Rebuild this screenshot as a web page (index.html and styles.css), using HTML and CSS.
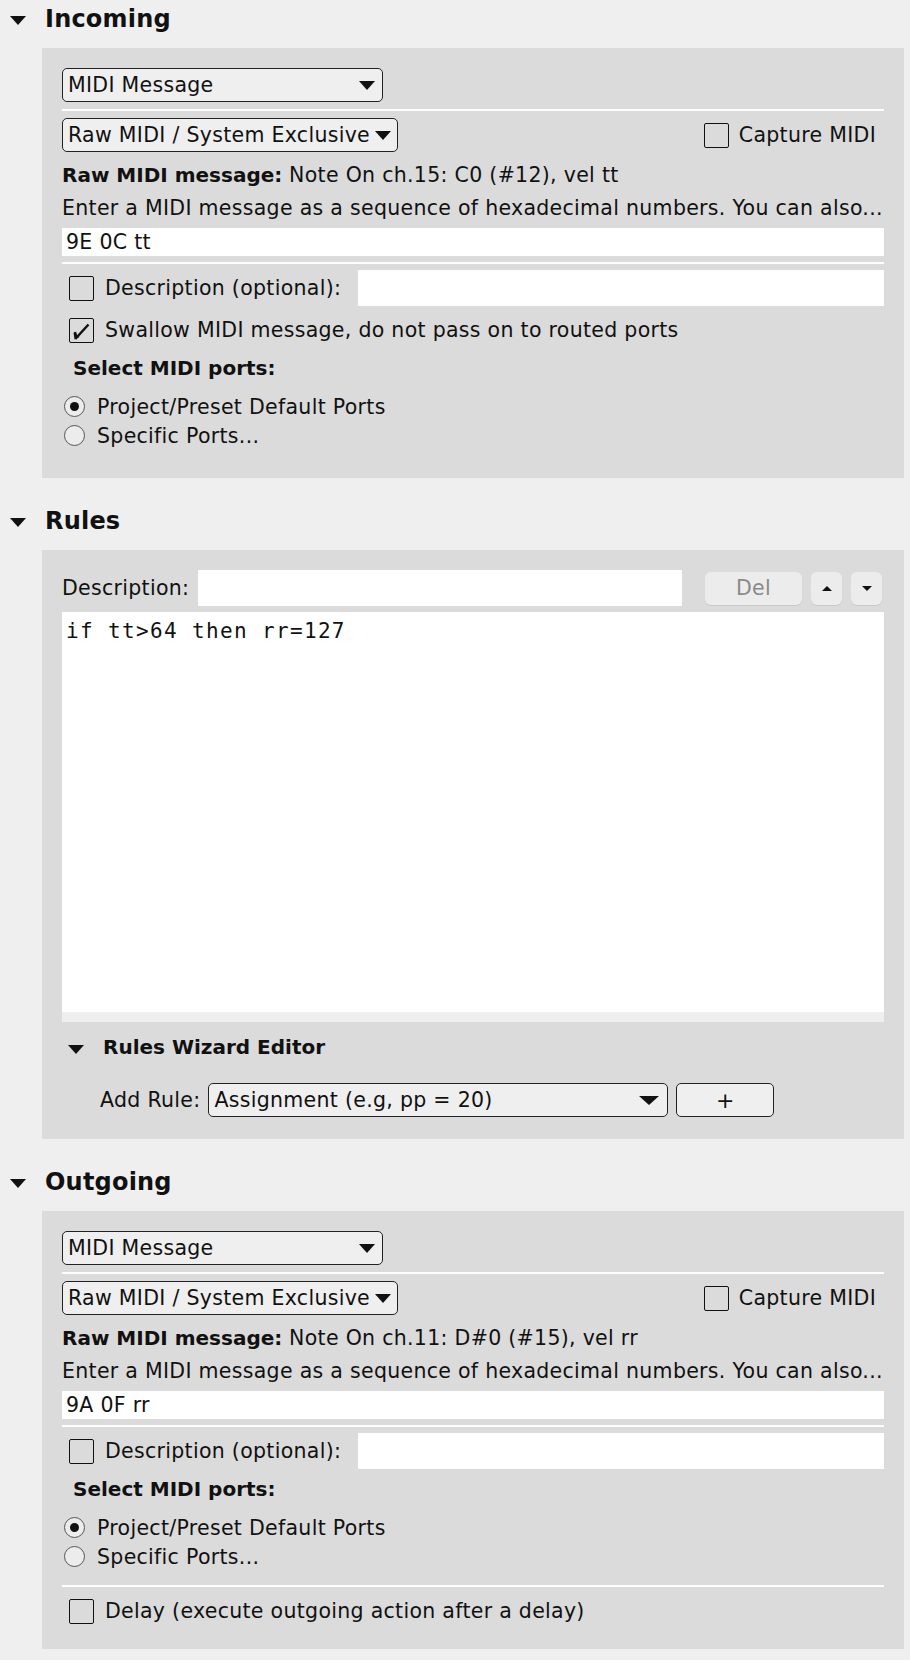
FILE: index.html
```html
<!DOCTYPE html>
<html>
<head>
	<meta http-equiv="Content-Type" content="text/html; charset=utf-8" />
	<title>Translator</title>
	<link rel="stylesheet" href="styles.css">
</head>
<body>
	<!-- Incoming -->
	<div class="section">
		<div class="sec-head"><span class="tri"></span>Incoming</div>
		<div class="panel">
			<div class="combo combo-type"><span>MIDI Message</span><i class="arrow"></i></div>
			<div class="sep sep-wide"></div>
			<div class="row-split">
				<div class="combo combo-raw"><span>Raw MIDI / System Exclusive</span><i class="arrow"></i></div>
				<label class="check capture"><span class="box"></span>Capture MIDI</label>
			</div>
			<div class="info first"><b>Raw MIDI message:</b> Note On ch.15: C0 (#12), vel tt</div>
			<div class="info">Enter a MIDI message as a sequence of hexadecimal numbers. You can also...</div>
			<input class="field hex" type="text" value="9E 0C tt">
			<div class="sep"></div>
			<div class="desc-row">
				<label class="check"><span class="box"></span>Description (optional):</label>
				<input class="field desc" type="text">
			</div>
			<label class="check swallow">
				<span class="box">
					<svg width="22" height="22" viewBox="0 0 22 22"><path d="M5 13 L6.5 18.5 L18.5 5.5" fill="none" stroke="#111" stroke-width="2.4"/><path d="M3.5 13.5 L9.5 18 L4.5 20.5 Z" fill="#111"/></svg>
				</span>Swallow MIDI message, do not pass on to routed ports
			</label>
			<div class="ports-title">Select MIDI ports:</div>
			<div class="radios">
				<div class="radio"><span class="dot on"></span>Project/Preset Default Ports</div>
				<div class="radio"><span class="dot"></span>Specific Ports...</div>
			</div>
		</div>
	</div>

	<!-- Rules -->
	<div class="section">
		<div class="sec-head"><span class="tri"></span>Rules</div>
		<div class="panel panel-rules">
			<div class="rule-head">
				<span>Description:</span>
				<input class="field rule-desc" type="text">
				<span class="btn btn-del">Del</span>
				<span class="btn btn-sm"><i class="mini-up"></i></span>
				<span class="btn btn-sm"><i class="mini-down"></i></span>
			</div>
			<div class="code">if tt&gt;64 then rr=127</div>
			<div class="hscroll"></div>
			<div class="wiz-head"><span class="tri"></span>Rules Wizard Editor</div>
			<div class="add-row">
				<span>Add Rule:</span>
				<div class="combo combo-rule"><span>Assignment (e.g, pp = 20)</span><i class="arrow"></i></div>
				<span class="btn-plus">+</span>
			</div>
		</div>
	</div>

	<!-- Outgoing -->
	<div class="section">
		<div class="sec-head"><span class="tri"></span>Outgoing</div>
		<div class="panel">
			<div class="combo combo-type"><span>MIDI Message</span><i class="arrow"></i></div>
			<div class="sep sep-wide"></div>
			<div class="row-split">
				<div class="combo combo-raw"><span>Raw MIDI / System Exclusive</span><i class="arrow"></i></div>
				<label class="check capture"><span class="box"></span>Capture MIDI</label>
			</div>
			<div class="info first"><b>Raw MIDI message:</b> Note On ch.11: D#0 (#15), vel rr</div>
			<div class="info">Enter a MIDI message as a sequence of hexadecimal numbers. You can also...</div>
			<input class="field hex" type="text" value="9A 0F rr">
			<div class="sep"></div>
			<div class="desc-row">
				<label class="check"><span class="box"></span>Description (optional):</label>
				<input class="field desc" type="text">
			</div>
			<div class="ports-title">Select MIDI ports:</div>
			<div class="radios">
				<div class="radio"><span class="dot on"></span>Project/Preset Default Ports</div>
				<div class="radio"><span class="dot"></span>Specific Ports...</div>
			</div>
			<div class="sep sep-after"></div>
			<label class="check delay"><span class="box"></span>Delay (execute outgoing action after a delay)</label>
		</div>
	</div>
</body>
</html>
```

FILE: styles.css
```css
body {
    margin: 0;
    padding: 0 6px 10px 0;
    background-color: #efefef;
    font-family: "DejaVu Sans", sans-serif;
    font-size: 20.5px;
    letter-spacing: 0.3px;
    color: #111;
}

b {
    font-size: 20px;
    letter-spacing: 0;
}

/* section headers */
.sec-head {
    display: flex;
    align-items: center;
    height: 28px;
    line-height: 28px;
    padding: 5px 0 0 10px;
    margin-bottom: 15px;
    font-size: 24px;
    font-weight: bold;
    letter-spacing: 0.2px;
}

.section + .section .sec-head {
    padding-top: 0;
    margin-top: 29px;
}

.tri {
    width: 0;
    height: 0;
    border-left: 8px solid transparent;
    border-right: 8px solid transparent;
    border-top: 9px solid #111;
    margin-right: 19px;
    margin-top: 3px;
}

.panel {
    margin-left: 42px;
    background-color: #dbdbdb;
    padding: 20px;
}

.panel-rules {
    padding-bottom: 22px;
}

/* combo boxes */
.combo {
    display: flex;
    align-items: center;
    justify-content: space-between;
    box-sizing: border-box;
    height: 34px;
    border: 1px solid #222;
    border-radius: 5px;
    background-color: #efefef;
    padding: 0 7px 0 5px;
}

.combo-type {
    width: 321px;
}

.combo-raw {
    width: 336px;
    padding-right: 6px;
}

.combo-rule {
    width: 460px;
    margin-left: 8px;
    padding-right: 8px;
}

.arrow {
    width: 0;
    height: 0;
    border-left: 8px solid transparent;
    border-right: 8px solid transparent;
    border-top: 9px solid #111;
}

.combo-rule .arrow {
    border-left-width: 10px;
    border-right-width: 10px;
}

.sep {
    height: 2px;
    background-color: #fff;
    margin: 6px 0;
}

.sep-wide {
    margin: 7px 0;
}

.sep-after {
    margin-top: 14px;
}

.row-split {
    display: flex;
    justify-content: space-between;
    align-items: center;
    height: 34px;
}

.check {
    display: flex;
    align-items: center;
}

.box {
    display: block;
    box-sizing: border-box;
    width: 25px;
    height: 25px;
    border: 1.5px solid #111;
    border-radius: 2px;
    margin-right: 11px;
}

.box svg {
    display: block;
}

.capture {
    margin-right: 8px;
}

.capture .box {
    margin-right: 10px;
}

.info {
    line-height: 33px;
    white-space: nowrap;
}

.info.first {
    margin-top: 7px;
}

/* text fields */
.field {
    display: block;
    box-sizing: border-box;
    width: 100%;
    height: 28px;
    border: none;
    padding: 0 4px;
    background-color: #fff;
    font: inherit;
    letter-spacing: inherit;
    color: #111;
    outline: none;
}

.hex {
    margin-top: 3px;
}

.desc-row {
    display: flex;
    align-items: center;
    height: 36px;
    padding-left: 7px;
}

.desc {
    width: 526px;
    height: 36px;
    margin-left: auto;
}

.swallow,
.delay {
    height: 36px;
    padding-left: 7px;
}

.swallow {
    margin-top: 6px;
}

.ports-title {
    font-size: 20px;
    font-weight: bold;
    letter-spacing: 0;
    line-height: 33px;
    margin-top: 4px;
    padding-left: 11px;
}

.radios {
    margin: 7px 0 8px;
    padding-left: 2px;
}

.radio {
    display: flex;
    align-items: center;
    height: 29px;
}

.dot {
    display: flex;
    align-items: center;
    justify-content: center;
    box-sizing: border-box;
    width: 21px;
    height: 21px;
    border: 1px solid #555;
    border-radius: 50%;
    background-color: #ececec;
    margin-right: 12px;
}

.dot.on::after {
    content: "";
    width: 9px;
    height: 9px;
    border-radius: 50%;
    background-color: #111;
}

/* rules */
.rule-head {
    display: flex;
    align-items: center;
    height: 36px;
}

.rule-desc {
    flex: 1;
    width: auto;
    height: 36px;
    margin: 0 23px 0 9px;
}

.btn {
    display: flex;
    align-items: center;
    justify-content: center;
    height: 33px;
    border-radius: 6px;
    background-color: #ececec;
    box-shadow: 0 1px 0 #c9c9c9;
}

.btn-del {
    width: 97px;
    color: #8a8a8a;
}

.btn-sm {
    width: 31px;
    margin-left: 9px;
}

.btn-sm:last-child {
    margin-right: 2px;
}

.mini-up {
    width: 0;
    height: 0;
    border-left: 5px solid transparent;
    border-right: 5px solid transparent;
    border-bottom: 5px solid #111;
}

.mini-down {
    width: 0;
    height: 0;
    border-left: 5px solid transparent;
    border-right: 5px solid transparent;
    border-top: 5px solid #111;
}

.code {
    box-sizing: border-box;
    height: 400px;
    margin-top: 6px;
    padding: 5px 4px;
    background-color: #fff;
    font-family: "DejaVu Sans Mono", monospace;
    font-size: 21px;
    line-height: 28px;
    letter-spacing: 1.35px;
}

.hscroll {
    height: 10px;
    background-color: #efefef;
}

.wiz-head {
    display: flex;
    align-items: center;
    margin-top: 9px;
    padding-left: 6px;
    line-height: 33px;
    font-size: 20px;
    font-weight: bold;
    letter-spacing: 0;
}

.wiz-head .tri {
    margin-top: 4px;
}

.add-row {
    display: flex;
    align-items: center;
    margin-top: 19px;
    padding-left: 38px;
}

.btn-plus {
    display: flex;
    align-items: center;
    justify-content: center;
    box-sizing: border-box;
    width: 98px;
    height: 34px;
    margin-left: 8px;
    border: 1px solid #222;
    border-radius: 5px;
    background-color: #efefef;
    font-size: 22px;
}
```
